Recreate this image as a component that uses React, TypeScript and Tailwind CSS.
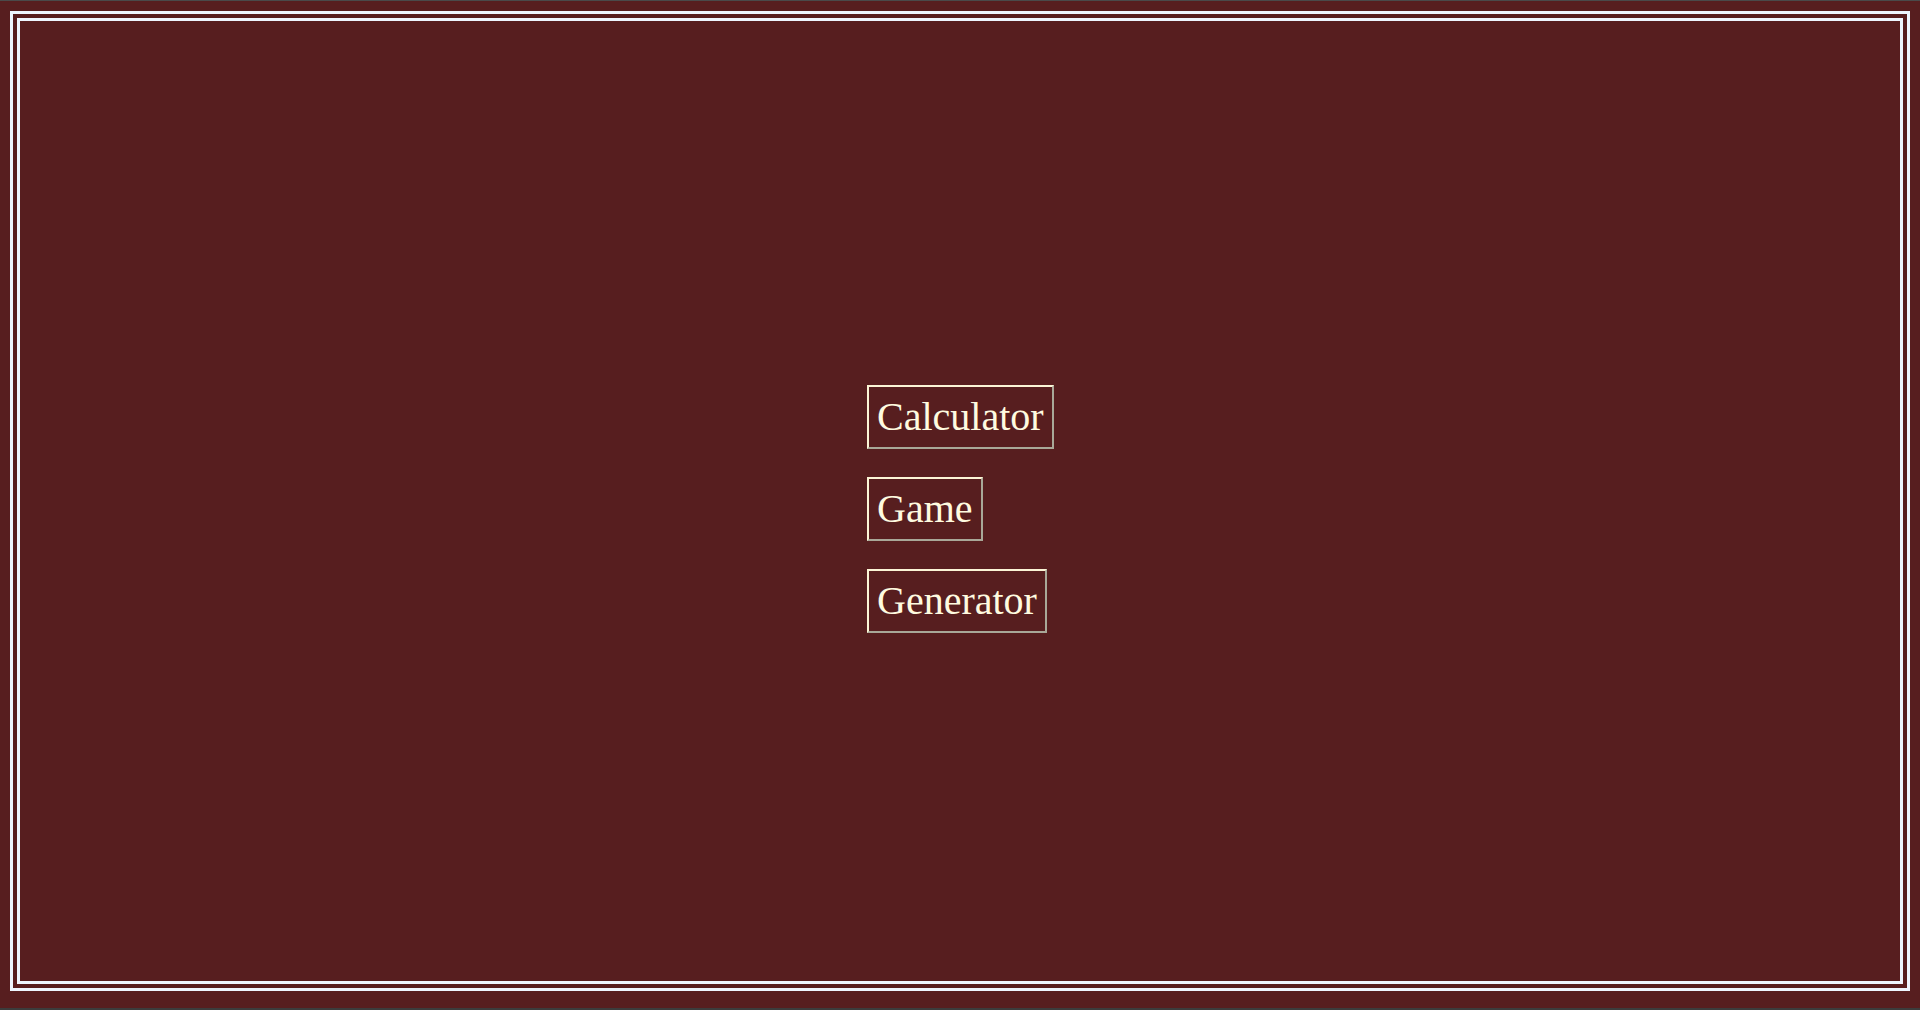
import React from "react";

const items = ["Calculator", "Game", "Generator"];

export default function App() {
  return (
    <div className="w-[1920px] h-[1010px] bg-[#571e1f] flex flex-col overflow-hidden">
      <div className="h-px bg-[#4a4a4a] shrink-0" />
      <div className="mt-[10px] ml-[10px] w-[1900px] h-[980px] border-[10px] border-double border-[#eef6ff] shrink-0">
        <div className="flex flex-col items-start gap-[28px] pt-[364px] pl-[847px]">
          {items.map((t) => (
            <button
              key={t}
              className="bg-transparent border-2 border-solid border-t-[#fcf5d6] border-l-[#fcf5d6] border-b-[#a9a898] border-r-[#a9a898] text-[#fffbe0] text-[40px] leading-[46px] px-[8px] py-[7px]"
              style={{ fontFamily: '"Liberation Serif", "Times New Roman", serif' }}
            >
              {t}
            </button>
          ))}
        </div>
      </div>
      <div className="flex-1" />
      <div className="h-[2px] bg-[#3c3c3c] shrink-0" />
    </div>
  );
}
